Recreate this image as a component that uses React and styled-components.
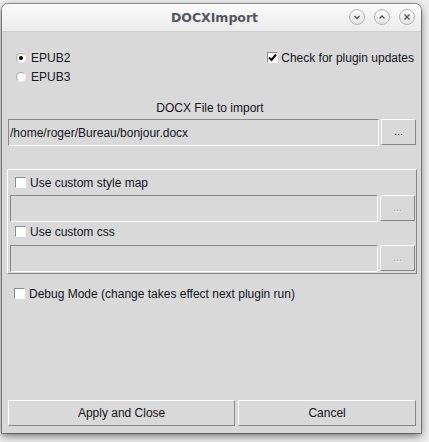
import React from "react";
import styled, { createGlobalStyle } from "styled-components";

const GlobalStyle = createGlobalStyle`
  html, body {
    margin: 0;
    padding: 0;
    background: #eeeeee;
  }
  body {
    font-family: "Liberation Sans", Arial, sans-serif;
  }
`;

const Screen = styled.div`
  width: 429px;
  height: 442px;
  padding: 4px 8px 0 2px;
  box-sizing: border-box;
  overflow: hidden;
`;

const Window = styled.div`
  width: 419px;
  height: 429px;
  display: flex;
  flex-direction: column;
  border-radius: 6px 6px 0 0;
  overflow: hidden;
  box-shadow: 0 0 0 1px rgba(0, 0, 0, 0.35), 0 3px 8px rgba(0, 0, 0, 0.55);
  background: #d9d9d9;
`;

const TitleBar = styled.div`
  height: 28px;
  flex: none;
  position: relative;
  display: flex;
  align-items: center;
  justify-content: center;
  background: linear-gradient(#fbfbfb, #ebebeb);
  border-bottom: 1px solid #cfcfcf;
  box-sizing: border-box;
`;

const Title = styled.div`
  font-family: "DejaVu Sans", "Open Sans", sans-serif;
  font-weight: bold;
  font-size: 12.5px;
  color: #525760;
  margin-left: 6px;
`;

const TitleButtons = styled.div`
  position: absolute;
  right: 6px;
  top: 5px;
  display: flex;
  gap: 9px;
`;

const TitleButton = styled.div`
  width: 16px;
  height: 16px;
  box-sizing: border-box;
  border-radius: 50%;
  border: 1px solid #b3b3b3;
  background: linear-gradient(#fdfdfd, #e4e4e4);
  display: flex;
  align-items: center;
  justify-content: center;
`;

const Body = styled.div`
  flex: 1;
  display: flex;
  flex-direction: column;
  padding: 16px 5px 7px 6px;
  font-size: 12px;
  color: #15151c;
`;

const TopRow = styled.div`
  display: flex;
  justify-content: space-between;
  align-items: flex-start;
  padding-right: 2px;
`;

const RadioGroup = styled.div`
  display: flex;
  flex-direction: column;
  padding-left: 8px;
`;

const Option = styled.label`
  display: flex;
  align-items: center;
  height: 19px;
  gap: ${(p) => p.$gap || 5}px;
  padding-left: ${(p) => p.$indent || 0}px;
`;

const RadioCircle = styled.span`
  width: 10px;
  height: 10px;
  box-sizing: border-box;
  border-radius: 50%;
  background: #fff;
  border: 1px solid;
  border-color: #a8a8a8 #f4f4f4 #f4f4f4 #a8a8a8;
  display: flex;
  align-items: center;
  justify-content: center;
  &::after {
    content: "";
    display: ${(p) => (p.$checked ? "block" : "none")};
    width: 4px;
    height: 4px;
    border-radius: 50%;
    background: #000;
  }
`;

const Box = styled.span`
  width: 11px;
  height: 11px;
  box-sizing: border-box;
  background: #fff;
  border: 1px solid;
  border-color: #8c8c8c #ffffff #ffffff #8c8c8c;
  display: flex;
  align-items: center;
  justify-content: center;
`;

const SectionLabel = styled.div`
  text-align: center;
  margin-top: 14px;
  height: 16px;
  line-height: 16px;
  padding-right: 4px;
`;

const FieldRow = styled.div`
  display: flex;
  gap: 2px;
  margin-top: ${(p) => p.$top || 0}px;
`;

const Field = styled.div`
  flex: 1;
  height: 27px;
  box-sizing: border-box;
  border: 1px solid;
  border-color: #888888 #ffffff #ffffff #888888;
  display: flex;
  align-items: center;
  padding-left: 1px;
  white-space: nowrap;
  overflow: hidden;
`;

const DotsButton = styled.div`
  width: 35px;
  height: 26px;
  box-sizing: border-box;
  border: 1px solid;
  border-color: #ffffff #888888 #888888 #ffffff;
  display: flex;
  align-items: center;
  justify-content: center;
  font-size: 11px;
  color: ${(p) => (p.$disabled ? "#a9a9a9" : "#15151c")};
  text-shadow: ${(p) => (p.$disabled ? "1px 1px 0 #f2f2f2" : "none")};
  padding-bottom: 2px;
`;

const Group = styled.div`
  margin: 23px -1px 0 -1px;
  border: 1px solid;
  border-color: #ffffff #888888 #888888 #ffffff;
  padding: 3px 1px 1px 2px;
  display: flex;
  flex-direction: column;
`;

const Spacer = styled.div`
  flex: 1;
`;

const ButtonBar = styled.div`
  display: flex;
  gap: 3px;
`;

const PushButton = styled.div`
  flex: ${(p) => p.$grow};
  height: 26px;
  box-sizing: border-box;
  border: 1px solid;
  border-color: #ffffff #888888 #888888 #ffffff;
  display: flex;
  align-items: center;
  justify-content: center;
`;

const Chevron = ({ up }) => (
  <svg width="8" height="8" viewBox="0 0 8 8">
    <polyline
      points={up ? "1.5,5.5 4,3 6.5,5.5" : "1.5,3 4,5.5 6.5,3"}
      fill="none"
      stroke="#555"
      strokeWidth="1.4"
    />
  </svg>
);

const Cross = () => (
  <svg width="8" height="8" viewBox="0 0 8 8">
    <path d="M1.5 1.5 L6.5 6.5 M6.5 1.5 L1.5 6.5" stroke="#555" strokeWidth="1.4" />
  </svg>
);

const Check = () => (
  <svg width="9" height="9" viewBox="0 0 9 9">
    <polyline points="1,4.5 3.5,7 8,1.5" fill="none" stroke="#000" strokeWidth="2" />
  </svg>
);

const Checkbox = ({ checked, label, indent, gap }) => (
  <Option $indent={indent} $gap={gap}>
    <Box>{checked && <Check />}</Box>
    {label}
  </Option>
);

export default function App() {
  return (
    <Screen>
      <GlobalStyle />
      <Window>
        <TitleBar>
          <Title>DOCXImport</Title>
          <TitleButtons>
            <TitleButton><Chevron /></TitleButton>
            <TitleButton><Chevron up /></TitleButton>
            <TitleButton><Cross /></TitleButton>
          </TitleButtons>
        </TitleBar>
        <Body>
          <TopRow>
            <RadioGroup>
              <Option>
                <RadioCircle $checked />
                EPUB2
              </Option>
              <Option>
                <RadioCircle />
                EPUB3
              </Option>
            </RadioGroup>
            <Checkbox checked label="Check for plugin updates" gap={3} />
          </TopRow>

          <SectionLabel>DOCX File to import</SectionLabel>
          <FieldRow $top={3}>
            <Field>/home/roger/Bureau/bonjour.docx</Field>
            <DotsButton>...</DotsButton>
          </FieldRow>

          <Group>
            <Checkbox label="Use custom style map" indent={5} gap={4} />
            <FieldRow $top={3}>
              <Field />
              <DotsButton $disabled>...</DotsButton>
            </FieldRow>
            <Checkbox label="Use custom css" indent={5} gap={4} />
            <FieldRow $top={4}>
              <Field />
              <DotsButton $disabled>...</DotsButton>
            </FieldRow>
          </Group>

          <FieldRow $top={10}>
            <Checkbox label="Debug Mode (change takes effect next plugin run)" indent={6} gap={4} />
          </FieldRow>

          <Spacer />
          <ButtonBar>
            <PushButton $grow={228}>Apply and Close</PushButton>
            <PushButton $grow={178}>Cancel</PushButton>
          </ButtonBar>
        </Body>
      </Window>
    </Screen>
  );
}
